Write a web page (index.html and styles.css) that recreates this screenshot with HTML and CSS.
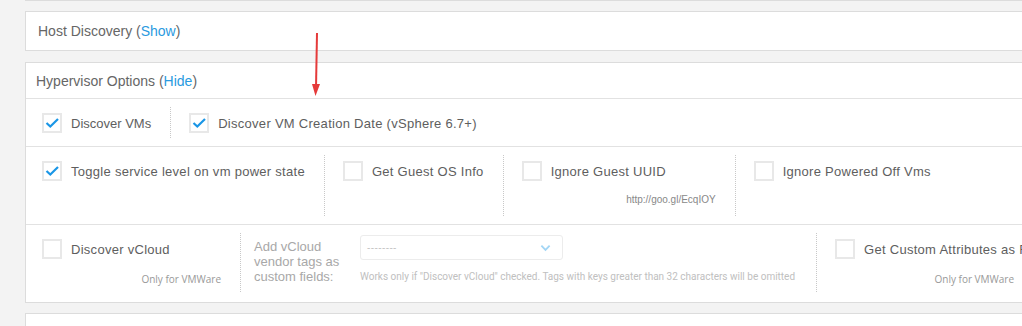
FILE: index.html
```html
<!DOCTYPE html>
<html lang="en">
  <head>
    <title>Hypervisor Options</title>
    <link rel="stylesheet" href="styles.css">
  </head>
  <body>
    <div class="page">
      <div class="panel-end"></div>

      <!-- Host discovery (collapsed) -->
      <div class="panel">
        <div class="panel-head host-head">Host Discovery (<a class="toggle">Show</a>)</div>
      </div>

      <!-- Hypervisor options -->
      <div class="panel">
        <div class="panel-head hyp-head">Hypervisor Options (<a class="toggle">Hide</a>)</div>

        <div class="row">
          <div class="cell first">
            <label class="check tight"><span class="box on"><svg viewBox="0 0 20 20"><path d="M4.5 10l3.8 3.5L16 6"/></svg></span>Discover VMs</label>
          </div>
          <div class="cell">
            <label class="check"><span class="box on"><svg viewBox="0 0 20 20"><path d="M4.5 10l3.8 3.5L16 6"/></svg></span>Discover VM Creation Date (vSphere 6.7+)</label>
          </div>
        </div>

        <div class="row">
          <div class="cell first">
            <label class="check"><span class="box on"><svg viewBox="0 0 20 20"><path d="M4.5 10l3.8 3.5L16 6"/></svg></span>Toggle service level on vm power state</label>
          </div>
          <div class="cell">
            <label class="check"><span class="box"></span>Get Guest OS Info</label>
          </div>
          <div class="cell uuid">
            <label class="check"><span class="box"></span>Ignore Guest UUID</label>
            <div class="note link">http://goo.gl/EcqIOY</div>
          </div>
          <div class="cell">
            <label class="check"><span class="box"></span>Ignore Powered Off Vms</label>
          </div>
        </div>

        <div class="row last">
          <div class="cell first vmware">
            <label class="check"><span class="box"></span>Discover vCloud</label>
            <div class="note low">Only for VMWare</div>
          </div>
          <div class="cell tags">
            <div class="tags-label">Add vCloud vendor tags as custom fields:</div>
            <div class="tags-field">
              <div class="select">
                <span class="placeholder">--------</span>
                <svg class="chevron" viewBox="0 0 12 8"><path d="M1.5 1.5L6 6l4.5-4.5"/></svg>
              </div>
              <div class="help">Works only if "Discover vCloud" checked. Tags with keys greater than 32 characters will be omitted</div>
            </div>
          </div>
          <div class="cell vmware">
            <label class="check"><span class="box"></span>Get Custom Attributes as Fields</label>
            <div class="note low">Only for VMWare</div>
          </div>
        </div>
      </div>

      <div class="panel next"></div>
    </div>

    <!-- annotation arrow -->
    <svg class="arrow" width="20" height="70" viewBox="0 0 20 70">
      <path d="M10 1L9 56" />
      <polygon points="5,52 13,52 8.5,64" />
    </svg>
  </body>
</html>
```

FILE: styles.css
```css
body {
  margin: 0;
  background: #f3f3f3;
  overflow: hidden;
  font-family: "Liberation Sans", Arial, sans-serif;
  color: #606060;
}

.page { width: 1120px; margin-left: 25px; }

.panel-end { height: 0; border-bottom: 1px solid #dcdcdc; }

.panel {
  background: #fff;
  border: 1px solid #dcdcdc;
  margin-top: 10px;
}
.panel + .panel { margin-top: 11px; }
.panel.next { height: 20px; margin-top: 10px; }

.panel-head { font-size: 14px; color: #666; }
.host-head { line-height: 38px; padding-left: 12px; }
.hyp-head { line-height: 32px; padding: 2px 0 1px 10px; border-bottom: 1px solid #e2e2e2; }

.toggle { color: #2a9ae0; text-decoration: none; cursor: pointer; }

/* Option rows */
.row {
  display: flex;
  align-items: stretch;
  padding: 8px 0;
  border-bottom: 1px solid #e2e2e2;
}
.row.last { border-bottom: none; padding-bottom: 10px; }

.cell {
  padding: 6px 19px 5px 18px;
  border-left: 1px dotted #c8c8c8;
}
.cell.first { border-left: none; padding-left: 16px; }
.cell.uuid { width: 194px; }
.cell.vmware { width: 179px; }

.check {
  display: flex;
  align-items: center;
  height: 20px;
  font-size: 13px;
  letter-spacing: 0.28px;
  white-space: nowrap;
  color: #5e5e5e;
}
.check.tight { letter-spacing: 0; }

.box {
  width: 16px;
  height: 16px;
  border: 2px solid #e8e8e8;
  margin-right: 9px;
  flex: none;
}
.box svg { display: block; width: 20px; height: 20px; margin: -2px; overflow: visible; }
.box svg path { fill: none; stroke: #1a96e6; stroke-width: 2.2; }

.note { text-align: right; font-size: 10px; line-height: 14px; color: #999; letter-spacing: 0; }
.note.link { margin-top: 12px; margin-bottom: 4px; color: #888; }
.note.low { margin-top: 13px; margin-bottom: 1px; font-family: "Open Sans", sans-serif; }

/* vCloud tags */
.cell.tags { display: flex; padding-left: 13px; padding-right: 21px; }
.tags-label {
  width: 92px;
  font-size: 13px;
  line-height: 15px;
  color: #a8a8a8;
}
.tags-field { margin-left: 14px; margin-top: -4px; }

.select {
  width: 184px;
  height: 23px;
  border: 1px solid #ececec;
  border-radius: 3px;
  display: flex;
  align-items: center;
  justify-content: space-between;
  padding: 0 11px 0 6px;
}
.placeholder { font-size: 10px; color: #c4c4c4; letter-spacing: 0.4px; }
.chevron { width: 11px; height: 8px; }
.chevron path { fill: none; stroke: #a3d6f5; stroke-width: 2; }

.help {
  margin-top: 10px;
  font-family: Roboto, sans-serif;
  font-size: 10px;
  line-height: 14px;
  color: #c0c0c0;
  white-space: nowrap;
}

/* red annotation arrow */
.arrow { position: absolute; left: 307px; top: 32px; }
.arrow path { stroke: #e53a3a; stroke-width: 2; fill: none; }
.arrow polygon { fill: #e53a3a; }
```
